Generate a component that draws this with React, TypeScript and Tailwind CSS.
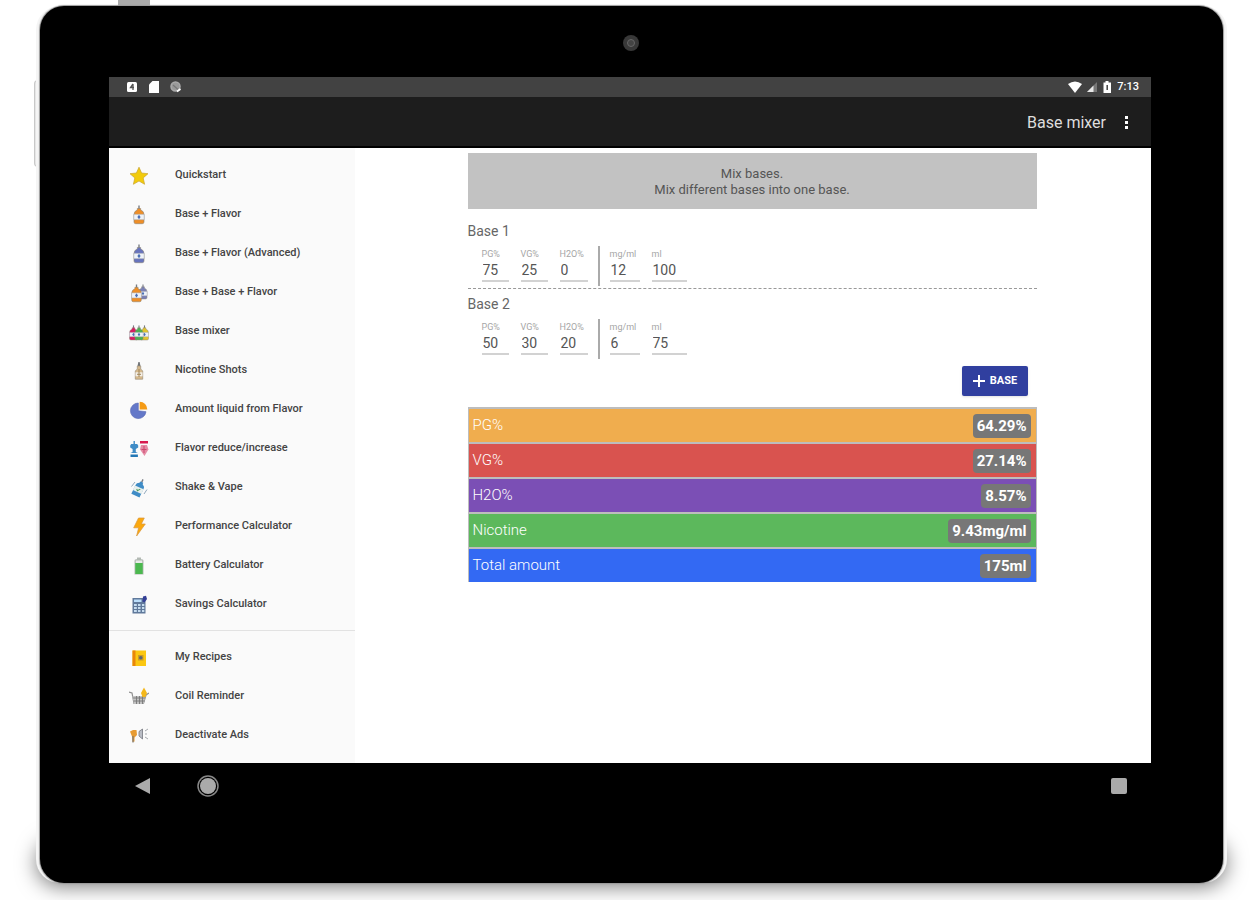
import { useState } from "react";
import type { ReactNode } from "react";

function Bottle({ color, x = 0, scale = 1 }: { color: string; x?: number; scale?: number }) {
  return (
    <g transform={`translate(${x} ${20 - 20 * scale}) scale(${scale})`}>
      <path d="M9.300 .5h1.400v4H9.300z" fill="#777b82" />
      <path d="M8.300 3.500h3.400v1.500Q15 6.200 15 9.500V17q0 1.700-1.700 1.700H6.700Q5 18.700 5 17V9.500Q5 6.200 8.300 5z" fill={color} stroke="#8b8577" strokeWidth=".6" />
      <path d="M4.800 9.300h10.400v5.400H4.800z" fill="#eef2f8" stroke="#a3a6ad" strokeWidth=".5" />
      <path d="m10 9.800 1.600 2.200-1.600 2.200L8.400 12z" fill="#4a6fb5" />
    </g>
  );
}

function Svg({ children }: { children: ReactNode }) {
  return (
    <svg viewBox="0 0 20 20" className="size-5 shrink-0" aria-hidden="true">
      {children}
    </svg>
  );
}

const tools: { label: string; icon: ReactNode }[] = [
  {
    label: "Quickstart",
    icon: <path d="m10 1.2 2.6 5.8 6.4.7-4.8 4.2 1.4 6.4-5.6-3.3-5.6 3.3 1.4-6.4L1 7.7 7.4 7z" fill="#f2cb0b" stroke="#c9a42c" strokeWidth=".7" />,
  },
  { label: "Base + Flavor", icon: <Bottle color="#ee8e27" /> },
  { label: "Base + Flavor (Advanced)", icon: <Bottle color="#6673bd" /> },
  {
    label: "Base + Base + Flavor",
    icon: (
      <>
        <g transform="translate(0 -3)">
          <Bottle color="#7a80b5" x={6} scale={0.8} />
        </g>
        <Bottle color="#ee8e27" x={-2} scale={0.95} />
      </>
    ),
  },
  {
    label: "Base mixer",
    icon: (
      <g transform="translate(0 -1)">
        <Bottle color="#d81b60" x={-3.5} scale={0.8} />
        <Bottle color="#e3c52c" x={7.5} scale={0.8} />
        <Bottle color="#4caf50" x={2} scale={0.8} />
      </g>
    ),
  },
  {
    label: "Nicotine Shots",
    icon: (
      <>
        <path d="M9.4 1h1.2l.9 4h-3z" fill="#6f7276" />
        <path d="M8.3 5h3.4v3l2 2v8.2H6.3V10l2-2z" fill="#d6b98c" stroke="#9c8f7c" strokeWidth=".7" />
        <path d="M6.5 11.3h7v4h-7z" fill="#f3efe8" />
        <path d="M10 8v8M8 13.3h4" stroke="#a08558" />
      </>
    ),
  },
  {
    label: "Amount liquid from Flavor",
    icon: (
      <>
        <path d="M9.3 3A7.8 7.8 0 1 0 17 11.7L9.3 10.8z" fill="#6478c8" stroke="#5465b0" strokeWidth=".6" />
        <path d="M10.7 1.8a7.6 7.6 0 0 1 7.6 7.7h-7.6z" fill="#f59b16" />
      </>
    ),
  },
  {
    label: "Flavor reduce/increase",
    icon: (
      <>
        <path d="M4.5 2h1.4v3h2.3l1 1.5v2L6.8 10v3l2.1 1H1.5l2.1-1v-3L1.2 8.500V6.500L2.200 5h2.300z" fill="#3f8cc6" />
        <path d="M1.500 15.500h7.400V18H1.500z" fill="#2277b5" />
        <path d="M11 2h8v2.500h-8z" fill="#d81b50" />
        <path d="M12 6h6l1.400 4.500L15.500 17 11 10.500z" fill="#e58ca5" />
        <path d="M15 7v7M12.500 10.500h5" stroke="#cb476e" />
      </>
    ),
  },
  {
    label: "Shake & Vape",
    icon: (
      <>
        <g transform="rotate(25 10 10)">
          <path d="M9.300 .5h1.400v4H9.300z" fill="#777b82" />
          <path d="M8.300 3.500h3.400v1.500Q14.500 6.200 14.500 9v9.500h-9V9Q5.500 6.200 8.300 5z" fill="#3f8cc6" />
          <path d="M5.300 9.300h9.400v5H5.300z" fill="#e9f0ee" />
          <path d="m8.300 11.700 1.400 1.500 2-2.700" fill="none" stroke="#4c9a59" />
        </g>
        <path d="M2.500 8.500 6 4M15 16l3-4.500" stroke="#91a9bd" />
      </>
    ),
  },
  {
    label: "Performance Calculator",
    icon: <path d="M9.500 1h5.800l-3 6h4L7.600 19l2-8.200H4.700z" fill="#fba80e" stroke="#d9963b" strokeWidth=".7" />,
  },
  {
    label: "Battery Calculator",
    icon: (
      <>
        <path d="M8 1.500h4v1.700h1q1.500 0 1.500 1.500V18.500h-9V4.700q0-1.500 1.500-1.500h1z" fill="#b3bab4" />
        <path d="M6.800 4.500h6.400v2.500H6.800z" fill="#e8ebe8" />
        <path d="M6.300 7h7.400v11H6.300z" fill="#4bb84f" />
      </>
    ),
  },
  {
    label: "Savings Calculator",
    icon: (
      <>
        <path d="M3.500 3h13v15.500h-13z" fill="#60799b" />
        <path d="M5 4.500h7.500V7H5z" fill="#bbdefb" />
        <path d="M5 9h2.800v2H5zm4 0h2.500v2H9zm4 0h2.300v2H13zM5 12h2.800v2H5zm4 0h2.500v2H9zm4 0h2.300v2H13zM5 15h2.800v2H5zm4 0h2.500v2H9zm4 0h2.300v2H13z" fill="#c6dcef" />
        <path d="m14 1.500 3-.8 1 3.300-2.500 3.500-2-1z" fill="#343f96" />
      </>
    ),
  },
];

const extras: { label: string; icon: ReactNode }[] = [
  {
    label: "My Recipes",
    icon: (
      <>
        <path d="M3.500 2.500h13.500v15.500H3.500z" fill="#fbc712" />
        <path d="M3.500 2.500h3v15.500h-3z" fill="#e9860b" />
        <path d="M9 7h5.500v5.500H9z" fill="#c99a28" />
        <circle cx="11.800" cy="9.800" r="1.800" fill="#5d6772" />
      </>
    ),
  },
  {
    label: "Coil Reminder",
    icon: (
      <>
        <path d="m0 5 3 1 2 10.500h9.500L17 8l3-2" fill="none" stroke="#8f8f8f" strokeWidth="1.200" />
        <path d="M3.500 9h13L14.500 17H5z" fill="#c2c2c2" />
        <path d="M4 11h12M4.500 14h11M7.500 9v8M10.500 9v8M13.500 9v8" stroke="#787878" strokeWidth=".9" />
        <path d="m15 .5 3 5.500-1.500 4h-3L12 6z" fill="#f4b81c" />
      </>
    ),
  },
  {
    label: "Deactivate Ads",
    icon: (
      <>
        <path d="M1 5.500 4 4l3.500 0 .5 5-2.500 2.500v4l-2 .5-.5-5.500z" fill="#e79b32" />
        <path d="M4 10v6.500" stroke="#777" strokeWidth="1.200" />
        <path d="M10 5.500 13.500 3v10L10 10z" fill="#b9bcc4" stroke="#73767d" strokeWidth=".8" />
        <path d="m16 5 3-2M16 8h2M16 11l3 2" stroke="#a5a8ad" />
      </>
    ),
  },
];

function MenuList({ items }: { items: typeof tools }) {
  return (
    <ul>
      {items.map((item) => (
        <li key={item.label}>
          <a href="#" className="flex h-[39px] items-center gap-[26px] pl-5 text-[11px] font-medium text-[#444]">
            <Svg>{item.icon}</Svg>
            {item.label}
          </a>
        </li>
      ))}
    </ul>
  );
}

function Field({ id, label, value, className }: { id: string; label: string; value: string; className: string }) {
  const [text, setText] = useState(value);
  return (
    <div className={`flex flex-col ${className}`}>
      <label htmlFor={id} className="text-[9px] leading-3 text-[#a6a6a6]">
        {label}
      </label>
      <input
        id={id}
        value={text}
        onChange={(e) => setText(e.target.value)}
        className="h-[22px] w-full border-b-2 border-[#d2d2d2] px-px text-sm leading-5 text-[#555] outline-none"
      />
    </div>
  );
}

function BaseForm({ index, values }: { index: number; values: string[] }) {
  return (
    <fieldset>
      <legend className="text-sm leading-[18px] text-[#666]">Base {index}</legend>
      <div className="flex pt-1.5 pl-3.5">
        <div className="flex gap-3 pt-0.5 pr-2.5">
          <Field id={`pg-${index}`} label="PG%" value={values[0]} className="w-[27px]" />
          <Field id={`vg-${index}`} label="VG%" value={values[1]} className="w-[27px]" />
          <Field id={`water-${index}`} label="H2O%" value={values[2]} className="w-[28px]" />
        </div>
        <div className="mb-0.5 flex h-10 gap-3 border-l-2 border-[#aaa] pt-0.5 pl-2.5">
          <Field id={`nicotine-${index}`} label="mg/ml" value={values[3]} className="w-[30px]" />
          <Field id={`amount-${index}`} label="ml" value={values[4]} className="w-[35px]" />
        </div>
      </div>
    </fieldset>
  );
}

const results = [
  { label: "PG%", value: "64.29%", color: "bg-[#f0ad4e]" },
  { label: "VG%", value: "27.14%", color: "bg-[#d9534f]" },
  { label: "H2O%", value: "8.57%", color: "bg-[#7b4fb5]" },
  { label: "Nicotine", value: "9.43mg/ml", color: "bg-[#5cb85c]" },
  { label: "Total amount", value: "175ml", color: "bg-[#3369f3]" },
];

function StatusBar() {
  return (
    <div className="flex h-5 items-center justify-between bg-[#424242] pr-3 pl-4 text-white">
      <div className="flex items-center gap-2">
        <svg viewBox="0 0 14 14" className="size-3.5" aria-hidden="true">
          <rect x="2" y="2" width="10" height="10" rx="1.500" fill="#fff" />
          <path d="M8 4v6M8 4 5.500 7.500H9" fill="none" stroke="#555" strokeWidth="1.300" />
        </svg>
        <svg viewBox="0 0 14 14" className="size-3.5" aria-hidden="true">
          <path d="M5.500 1H12v12H2V4.500z" fill="#fff" />
        </svg>
        <svg viewBox="0 0 14 14" className="size-3.5" aria-hidden="true">
          <circle cx="6.500" cy="6.500" r="4.500" fill="#999" stroke="#aaa" strokeWidth="1.500" />
          <path d="m4 5 5 4.500" stroke="#777" strokeWidth="1.200" />
          <path d="M8 11.500 11.500 9" stroke="#fff" strokeWidth="1.800" />
        </svg>
      </div>
      <div className="flex items-center gap-1">
        <svg viewBox="0 0 16 12" className="h-3 w-4" aria-hidden="true">
          <path d="M1 3Q8-2 15 3L8 12z" fill="#fff" />
        </svg>
        <svg viewBox="0 0 10 12" className="h-3 w-2.5" aria-hidden="true">
          <path d="M10 1v10H0z" fill="#777" />
          <path d="M6.500 4.500V11H0z" fill="#e8e8e8" />
        </svg>
        <svg viewBox="0 0 12 14" className="h-3.5 w-3" aria-hidden="true">
          <path d="M4.500 1h3v1.500H10V13H2.500V2.500h2z" fill="#fff" />
          <path d="M6.200 5v5" stroke="#444" strokeWidth="1.500" />
        </svg>
        <span className="text-[11px] leading-4 font-medium">7:13</span>
      </div>
    </div>
  );
}

export default function App() {
  return (
    <div className="min-h-screen overflow-hidden bg-white pt-1.5 pr-9 pb-[17px] pl-10 font-[Roboto,sans-serif]">
      <div className="relative isolate">
        <div className="absolute right-0 bottom-0 left-0 -z-10 h-10 rounded-3xl bg-[#777] shadow-[0_0_20px_4px_rgba(0,0,0,0.5)]" />
        <div className="absolute -top-2 left-[78px] -z-10 h-2 w-8 bg-[#aaa]" />
        <div className="absolute top-[74px] -left-1.5 -z-10 h-[87px] w-1 rounded-l-sm border border-[#c8c8c8] bg-[#e6e6e6]" />

        <div className="rounded-3xl bg-black pr-[72px] pb-[75px] pl-[69px] shadow-[0_0_1px_1px_#999,4px_0_0_0_#f5f5f5,-4px_0_0_0_#f5f5f5]">
          <div className="flex h-[71px] items-center justify-center pt-0.5 pl-0.5">
            <div className="flex size-4 items-center justify-center rounded-full bg-[#383838]">
              <div className="size-2 rounded-full border border-[#666] bg-[#444]" />
            </div>
          </div>

          <div className="bg-white">
            <StatusBar />
            <header className="flex h-[51px] items-center justify-end gap-3.5 border-b-2 border-black bg-[#1d1d1d] pt-0.5 pr-[19px]">
              <h1 className="text-base text-[#dedede]">Base mixer</h1>
              <button type="button" aria-label="More options" className="flex w-3 flex-col items-center gap-0.5">
                <span className="size-[3px] bg-white" />
                <span className="size-[3px] bg-white" />
                <span className="size-[3px] bg-white" />
              </button>
            </header>

            <div className="flex">
              <nav className="w-[246px] shrink-0 bg-[#fafafa] pt-2 pb-2">
                <MenuList items={tools} />
                <hr className="mt-1.5 mb-[7px] border-[#e2e2e2]" />
                <MenuList items={extras} />
              </nav>

              <main className="flex flex-1 flex-col items-center pt-[5px] pr-0.5">
                <div className="w-full max-w-[569px]">
                  <p className="flex h-14 items-center justify-center bg-[#c2c2c2] pt-0.5 text-center text-[13px] leading-4 text-[#555]">
                    <span>
                      Mix bases.
                      <br />
                      Mix different bases into one base.
                    </span>
                  </p>
                  <div className="border-b border-dashed border-[#999] pt-[13px]">
                    <BaseForm index={1} values={["75", "25", "0", "12", "100"]} />
                  </div>
                  <div className="pt-1.5">
                    <BaseForm index={2} values={["50", "30", "20", "6", "75"]} />
                  </div>
                  <div className="flex justify-end pt-[5px] pr-[9px] pb-[11px]">
                    <button
                      type="button"
                      className="flex h-[30px] w-[66px] items-center justify-center gap-1 rounded-xs bg-[#303f9f] text-[11px] font-bold text-white shadow-sm"
                    >
                      <svg viewBox="0 0 14 14" className="size-3.5" aria-hidden="true">
                        <path d="M7 1v12M1 7h12" stroke="#fff" strokeWidth="2" />
                      </svg>
                      BASE
                    </button>
                  </div>
                  <dl className="flex flex-col gap-0.5 border-x border-t-2 border-[#bdbdbd] bg-[#bdbdbd]">
                    {results.map((r) => (
                      <div key={r.label} className={`flex h-[33px] items-center justify-between pr-[5px] pl-1 ${r.color}`}>
                        <dt className="text-[15px] font-light text-white">{r.label}</dt>
                        <dd className="rounded-sm bg-[#777] px-1 text-[15px] leading-6 font-bold text-white">{r.value}</dd>
                      </div>
                    ))}
                  </dl>
                </div>
              </main>
            </div>
          </div>

          <div className="flex h-[45px] items-center justify-between pr-6 pl-[26px]">
            <div className="flex items-center gap-[45px]">
              <button type="button" aria-label="Back">
                <svg viewBox="0 0 16 18" className="h-[18px] w-4" aria-hidden="true">
                  <path d="M15 1v16L0 9z" fill="#aaa" />
                </svg>
              </button>
              <button type="button" aria-label="Home">
                <svg viewBox="0 0 24 24" className="size-6" aria-hidden="true">
                  <circle cx="12" cy="12" r="8" fill="#aaa" />
                  <circle cx="12" cy="12" r="10" fill="none" stroke="#888" strokeWidth="1.500" />
                </svg>
              </button>
            </div>
            <button type="button" aria-label="Recent apps" className="size-4 rounded-xs bg-[#aaa]" />
          </div>
        </div>
      </div>
    </div>
  );
}
